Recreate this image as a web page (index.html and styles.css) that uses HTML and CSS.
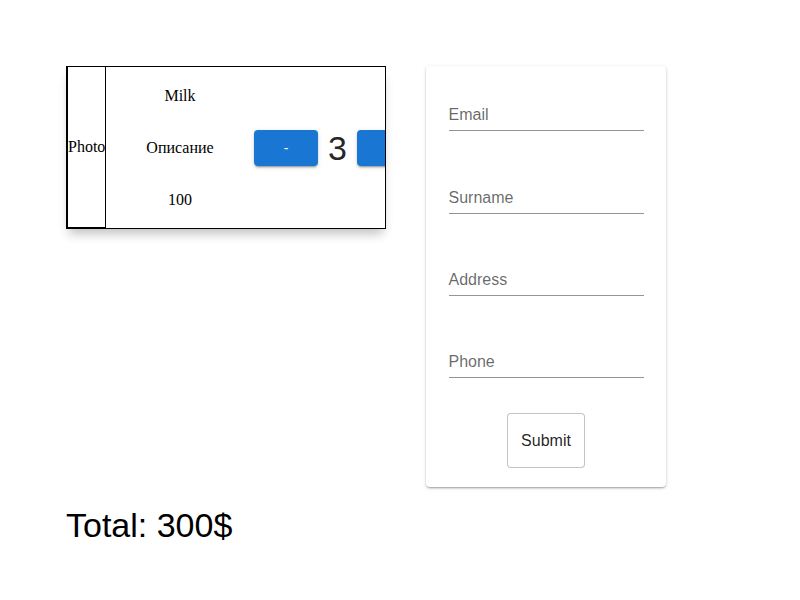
FILE: index.html
```html
<!DOCTYPE html>
<html>
<head>
<meta charset="utf-8">
<link rel="stylesheet" href="styles.css">
</head>
<body>
<div class="page">
  <div class="row">
    <div class="item">
      <div class="photo">Photo</div>
      <div class="info">
        <div>Milk</div>
        <div>Описание</div>
        <div>100</div>
      </div>
      <div class="counter">
        <button class="btn-contained">-</button>
        <span class="count">3</span>
        <button class="btn-contained">+</button>
      </div>
    </div>
    <form class="form-card">
      <div class="field first"><span class="label">Email</span></div>
      <div class="field"><span class="label">Surname</span></div>
      <div class="field"><span class="label">Address</span></div>
      <div class="field last"><span class="label">Phone</span></div>
      <button type="button" class="btn-outlined">Submit</button>
    </form>
  </div>
  <div class="total">Total: 300$</div>
</div>
</body>
</html>
```
FILE: styles.css
```css
body {
  margin: 0;
  background: #fff;
  font-family: "Liberation Sans", Arial, sans-serif;
}
.page {
  padding: 66px 0 0 66px;
}
.row {
  display: flex;
  align-items: flex-start;
  gap: 40px;
}
.item {
  width: 318px;
  height: 161px;
  border: 1px solid #000;
  display: flex;
  align-items: center;
  overflow: hidden;
  flex-shrink: 0;
  box-shadow: 0 8px 10px -3px rgba(0,0,0,0.24);
  font-family: "Liberation Serif", "Times New Roman", serif;
  font-size: 16px;
  color: #000;
}
.photo {
  align-self: stretch;
  display: flex;
  align-items: center;
  border-left: 1px solid #000;
  border-right: 1px solid #000;
  border-bottom: 1px solid #000;
  flex-shrink: 0;
  width: 37px;
  white-space: nowrap;
}
.info {
  width: 148px;
  flex-shrink: 0;
  display: flex;
  flex-direction: column;
  text-align: center;
  gap: 34px;
  line-height: 18px;
}
.counter {
  display: flex;
  align-items: center;
  flex-shrink: 0;
  margin-top: 1px;
}
.btn-contained {
  min-width: 64px;
  height: 36px;
  border: 0;
  border-radius: 4px;
  background: #1976d2;
  color: #fff;
  font-family: "Liberation Sans", Arial, sans-serif;
  font-size: 14px;
  font-weight: 500;
  padding: 6px 16px;
  box-shadow: 0 3px 1px -2px rgba(0,0,0,0.2), 0 2px 2px 0 rgba(0,0,0,0.14), 0 1px 5px 0 rgba(0,0,0,0.12);
}
.count {
  margin: 0 10px;
  font-family: "Liberation Sans", Arial, sans-serif;
  font-size: 34px;
  line-height: 36px;
  color: rgba(0,0,0,0.87);
}
.form-card {
  width: 240px;
  height: 421px;
  box-sizing: border-box;
  margin: 0;
  border-radius: 4px;
  background: #fff;
  box-shadow: 0 2px 2px -1px rgba(0,0,0,0.2), 0 1px 2px 0 rgba(0,0,0,0.14), 0 1px 4px 0 rgba(0,0,0,0.12);
  display: flex;
  flex-direction: column;
  align-items: center;
  padding-top: 38px;
}
.field {
  width: 195px;
  height: 25px;
  padding-top: 1px;
  border-bottom: 1px solid rgba(0,0,0,0.42);
  margin-bottom: 55px;
}
.field.first {
  margin-bottom: 56px;
}
.field.last {
  margin-bottom: 35px;
}
.label {
  display: block;
  font-size: 16px;
  line-height: 20px;
  color: rgba(0,0,0,0.6);
}
.btn-outlined {
  background: #fff;
  border: 1px solid rgba(0,0,0,0.23);
  border-radius: 4px;
  width: 78px;
  height: 55px;
  font-family: "Liberation Sans", Arial, sans-serif;
  font-size: 16px;
  color: rgba(0,0,0,0.87);
  padding: 0;
}
.total {
  margin-top: 17px;
  font-size: 34px;
  line-height: 42px;
  color: #000;
}
```
